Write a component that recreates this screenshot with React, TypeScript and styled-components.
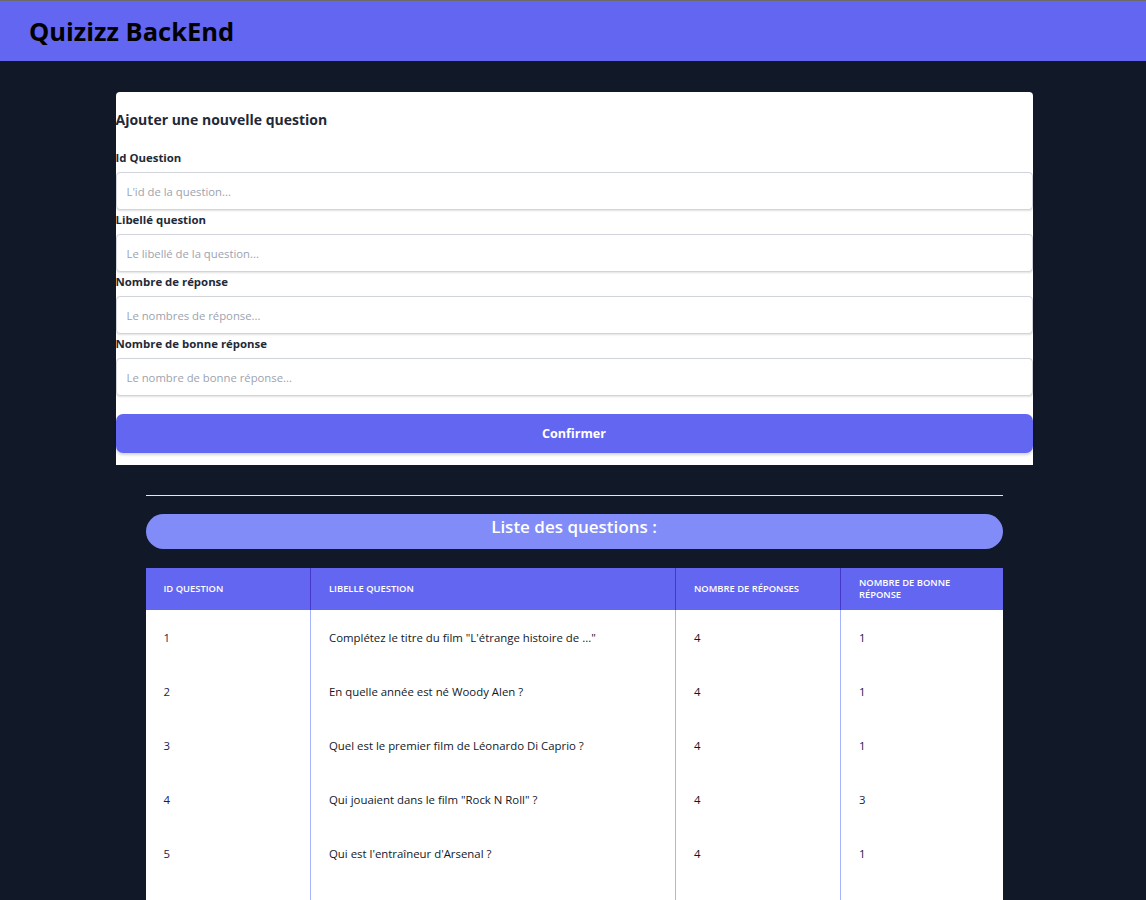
import styled, { createGlobalStyle } from 'styled-components';

const GlobalStyle = createGlobalStyle`
  * { box-sizing: border-box; }
  body {
    margin: 0;
    background-color: #111827;
    font-family: "Segoe UI", "Open Sans", sans-serif;
  }
`;

const Header = styled.header`
  height: 61px;
  border-top: 1px solid #6b6b6b;
  background-color: #6366f1;
  display: flex;
  align-items: center;
  padding-left: 29px;
`;

const Title = styled.h1`
  margin: 0;
  font-size: 25.5px;
  font-weight: 700;
  color: #000;
`;

const Main = styled.main`
  display: flex;
  flex-direction: column;
  align-items: center;
  padding: 31px 0 0 2px;
`;

const FormCard = styled.form`
  width: 917px;
  background: #fff;
  border-radius: 4px 4px 0 0;
  padding: 18px 0 12px;
  display: flex;
  flex-direction: column;
`;

const FormTitle = styled.h2`
  margin: 0 0 20px;
  font-size: 14px;
  line-height: 20px;
  font-weight: 700;
  color: #1f2937;
`;

const Field = styled.div`
  display: flex;
  flex-direction: column;
`;

const Label = styled.label`
  display: block;
  font-size: 11.4px;
  font-weight: 700;
  color: #1f2937;
  line-height: 16px;
  margin-bottom: 6px;
`;

const Input = styled.input`
  height: 38px;
  width: 100%;
  border: 1px solid #d1d5db;
  border-radius: 4px;
  box-shadow: 0 1px 2px rgba(0, 0, 0, 0.12);
  padding: 0 10px;
  font-family: inherit;
  font-size: 11.3px;
  margin: 0 0 2px;
  &::placeholder { color: #9ca3af; }
`;

const Button = styled.button`
  margin-top: 16px;
  height: 39px;
  border: none;
  border-radius: 7px;
  background: #6366f1;
  color: #fff;
  font-family: inherit;
  font-size: 12.6px;
  font-weight: 700;
  box-shadow: 0 2px 3px rgba(0, 0, 0, 0.18);
`;

const Section = styled.section`
  width: 857px;
  margin-top: 30px;
`;

const Divider = styled.hr`
  margin: 0;
  border: none;
  border-top: 1px solid #e5e7eb;
`;

const ListTitle = styled.h3`
  margin: 18px 0 19px;
  height: 35px;
  border-radius: 18px;
  background: #818cf8;
  color: #fff;
  text-align: center;
  font-size: 17px;
  font-weight: 600;
  line-height: 26px;
`;

const Table = styled.table`
  width: 100%;
  border-collapse: collapse;
  background: #fff;
`;

const Th = styled.th<{ $w: number }>`
  width: ${p => p.$w}px;
  height: 42px;
  background: #6366f1;
  color: #fff;
  font-size: 9.4px;
  font-weight: 600;
  text-transform: uppercase;
  text-align: left;
  padding: 0 18px;
  line-height: 12px;
  border-left: 1px solid #4338ca;
  &:first-child { border-left: none; }
`;

const Td = styled.td<{ $accent?: boolean }>`
  height: 54px;
  padding: 0 18px;
  font-size: 11.4px;
  color: ${p => (p.$accent ? '#1e1b4b' : '#111827')};
  border-left: 1px solid #a5b4fc;
  &:first-child { border-left: none; }
`;

const questions = [
  { id: 1, label: 'Complétez le titre du film "L\'étrange histoire de ..."', nb: 4, good: 1 },
  { id: 2, label: 'En quelle année est né Woody Alen ?', nb: 4, good: 1 },
  { id: 3, label: 'Quel est le premier film de Léonardo Di Caprio ?', nb: 4, good: 1 },
  { id: 4, label: 'Qui jouaient dans le film "Rock N Roll" ?', nb: 4, good: 3 },
  { id: 5, label: "Qui est l'entraîneur d'Arsenal ?", nb: 4, good: 1 },
];

const fields = [
  { label: 'Id Question', placeholder: "L'id de la question..." },
  { label: 'Libellé question', placeholder: 'Le libellé de la question...' },
  { label: 'Nombre de réponse', placeholder: 'Le nombres de réponse...' },
  { label: 'Nombre de bonne réponse', placeholder: 'Le nombre de bonne réponse...' },
];

const App = () => {
  return (
    <>
      <GlobalStyle />
      <Header>
        <Title>Quizizz BackEnd</Title>
      </Header>
      <Main>
        <FormCard onSubmit={e => e.preventDefault()}>
          <FormTitle>Ajouter une nouvelle question</FormTitle>
          {fields.map(f => (
            <Field key={f.label}>
              <Label>{f.label}</Label>
              <Input placeholder={f.placeholder} />
            </Field>
          ))}
          <Button type="submit">Confirmer</Button>
        </FormCard>

        <Section>
          <Divider />
          <ListTitle>Liste des questions :</ListTitle>
          <Table>
            <thead>
              <tr>
                <Th $w={165}>Id question</Th>
                <Th $w={365}>Libelle question</Th>
                <Th $w={165}>Nombre de réponses</Th>
                <Th $w={162}>Nombre de bonne réponse</Th>
              </tr>
            </thead>
            <tbody>
              {questions.map(q => (
                <tr key={q.id}>
                  <Td $accent>{q.id}</Td>
                  <Td>{q.label}</Td>
                  <Td>{q.nb}</Td>
                  <Td $accent>{q.good}</Td>
                </tr>
              ))}
              <tr>
                <Td />
                <Td />
                <Td />
                <Td />
              </tr>
            </tbody>
          </Table>
        </Section>
      </Main>
    </>
  );
};

export default App;
